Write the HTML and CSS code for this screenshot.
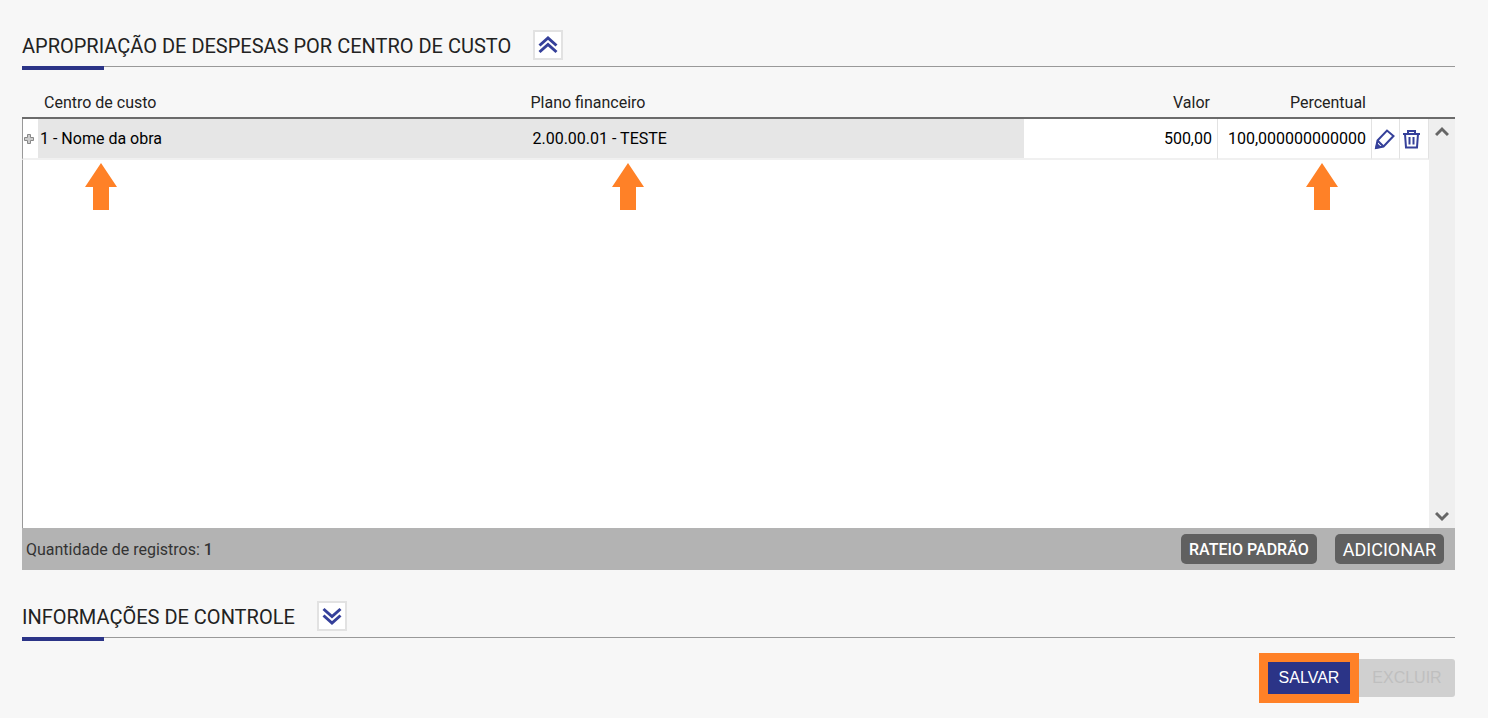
FILE: index.html
```html
<!DOCTYPE html>
<html lang="pt-BR">
<head>
    <meta charset="UTF-8">
    <meta name="viewport" content="width=device-width, initial-scale=1">
    <title>Apropriação de despesas</title>
    <link rel="stylesheet" href="styles.css">
</head>
<body>
    <section>
        <div class="section-title">
            <h2>APROPRIAÇÃO DE DESPESAS POR CENTRO DE CUSTO</h2>
            <button type="button" class="toggle" aria-label="Recolher">
                <svg width="20" height="18" viewBox="0 0 20 18"><path d="M1.500 9.500 10 2l8.500 7.500M1.500 16 10 8.500l8.500 7.500"/></svg>
            </button>
        </div>
        <div class="grid">
            <table>
                <colgroup>
                    <col class="col-expand"><col class="col-centro"><col><col class="col-valor"><col class="col-percentual"><col class="col-icon"><col class="col-trash">
                </colgroup>
                <thead>
                    <tr>
                        <th></th>
                        <th>Centro de custo</th>
                        <th class="plano">Plano financeiro</th>
                        <th class="number">Valor</th>
                        <th class="number last">Percentual</th>
                        <th></th>
                        <th></th>
                    </tr>
                </thead>
                <tbody>
                    <tr class="record">
                        <td class="expand">
                            <button type="button" class="icon-button" aria-label="Expandir">
                                <svg class="plus" width="12" height="12" viewBox="0 0 12 12"><path d="M4.500 1.500h3v3h3v3h-3v3h-3v-3h-3v-3h3z"/></svg>
                            </button>
                        </td>
                        <td class="locked">1 - Nome da obra
                            <svg class="arrow arrow-centro" width="32" height="47" viewBox="0 0 32 47"><path d="M16 0l16 24h-8v23H8V24H0z"/></svg>
                        </td>
                        <td class="locked">2.00.00.01 - TESTE
                            <svg class="arrow arrow-plano" width="32" height="47" viewBox="0 0 32 47"><path d="M16 0l16 24h-8v23H8V24H0z"/></svg>
                        </td>
                        <td class="number">500,00</td>
                        <td class="number">100,000000000000
                            <svg class="arrow arrow-percentual" width="32" height="47" viewBox="0 0 32 47"><path d="M16 0l16 24h-8v23H8V24H0z"/></svg>
                        </td>
                        <td class="action">
                            <button type="button" class="icon-button" aria-label="Editar">
                                <svg width="22" height="22" viewBox="0 0 22 22"><path d="M2 20l1.500-7.500L13 2.500l6.500 5.500L9.500 18.500zM3.500 12.500l6 6"/><path class="fill" d="M1 21l1.500-6.500 5.500 5z"/></svg>
                            </button>
                        </td>
                        <td class="action">
                            <button type="button" class="icon-button" aria-label="Excluir registro">
                                <svg width="20" height="22" viewBox="0 0 20 22"><path d="M1 6h17M6 6V3h7v3M3 6l1 13.500h11L16 6M7.500 9v7.500M11.500 9v7.500"/></svg>
                            </button>
                        </td>
                    </tr>
                    <tr><td class="empty" colspan="7"></td></tr>
                </tbody>
            </table>
            <div class="scrollbar">
                <svg width="14" height="12" viewBox="0 0 14 12"><path d="M1 10l6-6 6 6"/></svg>
                <svg width="14" height="12" viewBox="0 0 14 12"><path d="M1 3l6 6 6-6"/></svg>
            </div>
        </div>
        <div class="grid-footer">
            <span>Quantidade de registros: <b>1</b></span>
            <div class="grid-buttons">
                <button type="button" class="dark-button small">RATEIO PADRÃO</button>
                <button type="button" class="dark-button">ADICIONAR</button>
            </div>
        </div>
    </section>
    <section class="control">
        <div class="section-title">
            <h2>INFORMAÇÕES DE CONTROLE</h2>
            <button type="button" class="toggle" aria-label="Expandir seção">
                <svg width="20" height="18" viewBox="0 0 20 18"><path d="M1.500 2 10 9.500 18.500 2M1.500 8.500 10 16l8.500-7.500"/></svg>
            </button>
        </div>
    </section>
    <div class="form-buttons">
        <button type="submit" class="save">SALVAR</button>
        <button type="button" class="delete" disabled>EXCLUIR</button>
    </div>
</body>
</html>
```
FILE: styles.css
```css
* {box-sizing: border-box;}
body {margin: 0; padding: 30px 33px 15px 22px; background: #f7f7f7; color: #222; font-family: Roboto, sans-serif; font-size: 16px;}
button {font-family: inherit; cursor: pointer; border: none; padding: 0;}
svg {display: block; flex: none;}

.section-title {position: relative; display: flex; align-items: flex-start; gap: 22px; height: 37px; border-bottom: 1px solid #999;}
.section-title::after {content: ""; position: absolute; left: 0; top: 36px; width: 82px; height: 4px; background: #2b3487;}
.section-title h2 {margin: 0; font-size: 20px; line-height: 32px; font-weight: 400;}
.toggle {display: flex; align-items: center; justify-content: center; width: 30px; height: 30px; background: #fff; border: 2px solid #e2e2e2;}
.toggle svg {fill: none; stroke: #35409a; stroke-width: 3;}
.control {margin-top: 31px;}

.grid {display: flex; height: 461px;}
table {flex: 1; width: 100%; height: 100%; table-layout: fixed; border-collapse: separate; border-spacing: 0;}
.col-expand {width: 16px;}
.col-centro {width: 35%;}
.col-valor {width: 194px;}
.col-percentual {width: 154px;}
.col-icon {width: 28px;}
.col-trash {width: 29px;}
th {height: 52px; padding: 0 6px 4px; border-bottom: 2px solid #6b6b6b; text-align: left; vertical-align: bottom; font-weight: 400; line-height: 20px;}
th.plano {padding-left: 0;}
td {padding: 0;}
.record td {position: relative; height: 41px; padding: 0 2px; background: #fff; border-bottom: 2px solid #f0f0f0; border-right: 1px solid #e2e2e2; color: #000; line-height: 20px;}
.record td.expand {padding: 0; border-left: 1px solid #999; border-right: none;}
.record td.locked {background: #e6e6e6; border-right: none;}
th.number, .record td.number {text-align: right; padding-right: 5px;}
th.number {padding-right: 8px;}
th.last {padding-right: 6px;}
.icon-button {display: flex; align-items: center; width: 100%; height: 38px; background: none;}
.icon-button svg {fill: none; stroke: #35409a; stroke-width: 2;}
.icon-button .fill {fill: #35409a; stroke: none;}
.record .action {padding: 0 2px;}
.icon-button .plus {fill: #ccc; stroke: #888; stroke-width: 1;}
.empty {background: #fff; border-left: 1px solid #999;}

.arrow {position: absolute; top: 44px; fill: #ff8127;}
.arrow-centro {left: 47px;}
.arrow-plano {left: 82px;}
.arrow-percentual {right: 33px;}

.scrollbar {display: flex; flex-direction: column; justify-content: space-between; align-items: center; width: 26px; margin-top: 50px; padding: 6px 0; border-top: 2px solid #6b6b6b; background: #efefef;}
.scrollbar svg {fill: none; stroke: #666; stroke-width: 3;}

.grid-footer {display: flex; align-items: center; justify-content: space-between; height: 42px; padding: 0 11px 0 4px; background: #b3b3b3; color: #333;}
.grid-footer b {font-weight: 500;}
.grid-buttons {display: flex; gap: 18px;}
.dark-button {height: 30px; padding: 0 8px; border-radius: 5px; background: #606060; color: #fff; font-size: 18px;}
.dark-button.small {font-size: 16px; font-weight: 500;}

.form-buttons {display: flex; align-items: center; justify-content: flex-end; margin-top: 15px; font-family: "Liberation Sans", Arial, sans-serif;}
.save {width: 100px; height: 50px; border: 9px solid #ff8127; background: #2b3487; color: #fff; font-size: 16px;}
.delete {width: 96px; height: 38px; border-radius: 0 3px 3px 0; background: #d0d0d0; color: #bfbfbf; font-size: 16px; cursor: default;}
```
